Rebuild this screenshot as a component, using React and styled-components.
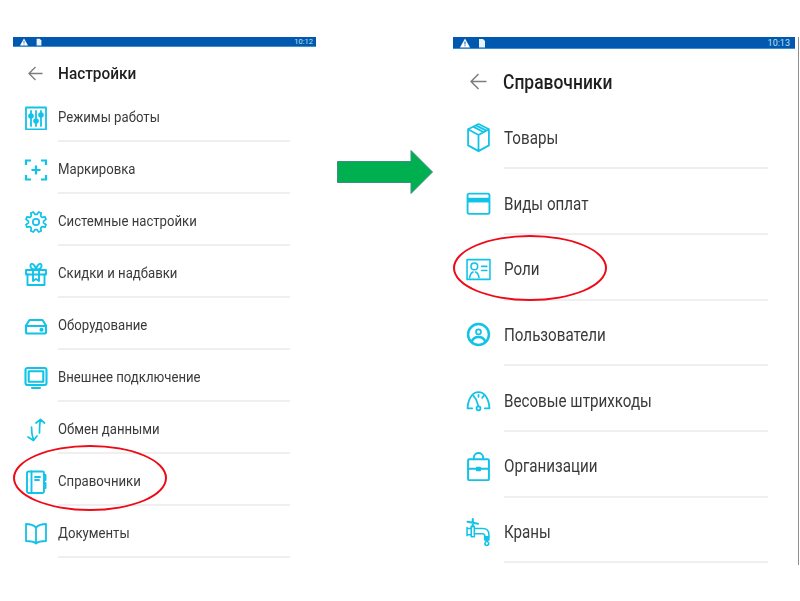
import React from "react";
import styled, { createGlobalStyle } from "styled-components";

const Global = createGlobalStyle`
  html, body {
    margin: 0;
    background: #fff;
    font-family: Roboto, "Liberation Sans", sans-serif;
  }
`;

const Page = styled.div`
  width: 800px;
  height: 601px;
  box-sizing: border-box;
  padding: 37px 0 0 13px;
  display: flex;
  align-items: flex-start;
  overflow: hidden;
`;

const Panel = styled.section`
  width: ${(p) => p.$width}px;
  height: ${(p) => p.$height}px;
  flex: none;
  filter: blur(0.35px);
  border-right: ${(p) => (p.$edge ? "1px solid #8e8e8e" : "none")};
  padding-right: ${(p) => (p.$edge ? 3 : 0)}px;
`;

const StatusBar = styled.div`
  height: ${(p) => p.$height}px;
  background: #0059ae;
  border-bottom: 1px solid #3f8fd0;
  box-sizing: border-box;
  padding: 0 ${(p) => p.$pad}px 0 7px;
  display: flex;
  align-items: center;
  gap: 7px;
  color: #fff;
`;

const Time = styled.span`
  margin-left: auto;
  font-size: ${(p) => p.$size}px;
  color: #bfe0f2;
`;

const Header = styled.header`
  height: ${(p) => p.$height}px;
  box-sizing: border-box;
  padding: ${(p) => p.$top}px 0 0 ${(p) => p.$pad}px;
  display: flex;
  align-items: center;
  gap: ${(p) => p.$gap}px;
`;

const Title = styled.h1`
  margin: 0;
  font-size: ${(p) => p.$size}px;
  font-weight: 500;
  color: #1f1f1f;
  white-space: nowrap;
  transform: scaleX(${(p) => p.$squeeze});
  transform-origin: left center;
`;

const BackIcon = styled.svg`
  flex: none;
  color: #7d7d7d;
`;

const List = styled.ul`
  list-style: none;
  margin: 0;
  padding: 0;
`;

const Row = styled.li`
  position: relative;
  height: ${(p) => p.$height}px;
  display: flex;
  align-items: stretch;
  padding: 0 ${(p) => p.$right}px 0 ${(p) => p.$left}px;
`;

const IconCell = styled.span`
  flex: none;
  width: ${(p) => p.$size}px;
  margin-right: ${(p) => p.$gap}px;
  padding-top: ${(p) => p.$lift}px;
  display: flex;
  align-items: center;
  justify-content: center;
  color: #12c3e8;

  svg {
    width: ${(p) => p.$size}px;
    height: auto;
    display: block;
  }
`;

const Label = styled.span`
  flex: 1;
  display: flex;
  align-items: center;
  box-sizing: border-box;
  padding-top: ${(p) => p.$lift}px;
  border-bottom: 2px solid #efefef;
`;

const LabelText = styled.span`
  font-size: ${(p) => p.$size}px;
  color: #3a3a3a;
  white-space: nowrap;
  transform: scaleX(${(p) => p.$squeeze});
  transform-origin: left center;
`;

const Oval = styled.span`
  position: absolute;
  left: 0;
  top: ${(p) => p.$top}px;
  width: 154px;
  height: 66px;
  box-sizing: border-box;
  border: 2.5px solid #ee0a16;
  border-radius: 50%;
`;

const ArrowSlot = styled.div`
  width: 137px;
  flex: none;
  padding: 113px 0 0 21px;
  box-sizing: border-box;

  svg {
    display: block;
  }
`;

const Line = ({ children, sw = 1.9, h = 24 }) => (
  <svg viewBox={`0 0 24 ${h}`} fill="none" stroke="currentColor" strokeWidth={sw} strokeLinecap="round" strokeLinejoin="round">
    {children}
  </svg>
);

// eight pointed teeth round the wheel
const gearPath = (() => {
  const pts = [];
  for (let i = 0; i < 8; i++) {
    const a = (i * Math.PI) / 4 + Math.PI / 8;
    [[-0.27, 7.6], [-0.13, 10.4], [0.13, 10.4], [0.27, 7.6]].forEach(([d, r]) => {
      pts.push(`${(12 + r * Math.cos(a + d)).toFixed(2)} ${(12 + r * Math.sin(a + d)).toFixed(2)}`);
    });
  }
  return `M${pts.join("L")}z`;
})();

const icons = {
  sliders: (
    <Line sw={1.8}>
      <rect x="2" y="1.5" width="20" height="22" />
      <path d="M7 5v3M7 12v8M12 5v8M12 17v3M17 5v2M17 11v9" />
      <circle cx="7" cy="10" r="1.9" fill="currentColor" />
      <circle cx="12" cy="15" r="1.9" fill="currentColor" />
      <circle cx="17" cy="9" r="1.9" fill="currentColor" />
    </Line>
  ),
  scan: (
    <Line sw={2.2}>
      <path d="M2 7V2.5h5M17 2.5h5V7M2 17v4.5h5M17 21.5h5V17M12 7.5v9M7.5 12h9" strokeLinecap="butt" strokeLinejoin="miter" />
    </Line>
  ),
  gear: (
    <Line sw={1.7}>
      <path d={gearPath} />
      <circle cx="12" cy="12" r="3.2" />
    </Line>
  ),
  gift: (
    <Line>
      <rect x="2" y="8" width="20" height="4.5" />
      <path d="M3.5 12.5V23h17V12.5M9 8v11l3-2 3 2V8" />
      <path d="M12 8C9 7.5 6 6 6.5 3 7.5.5 11 2 12 8zM12 8c3-.5 6-2 5.500-5C16.500.5 13 2 12 8z" />
    </Line>
  ),
  drive: (
    <Line sw={2.1}>
      <path d="M2 11.5l3.500-5.500h13l3.500 5.500V18a1.500 1.500 0 0 1-1.500 1.500h-17A1.500 1.500 0 0 1 2 18z" />
      <path d="M2 12h20" />
      <circle cx="17.5" cy="15.7" r="1" fill="currentColor" />
    </Line>
  ),
  monitor: (
    <Line sw={2.1}>
      <rect x="1.5" y="2" width="21" height="17" rx="2" />
      <rect x="4.7" y="5.2" width="14.6" height="10.6" />
      <path d="M8 22h8" />
    </Line>
  ),
  exchange: (
    <Line sw={1.7}>
      <path d="M15.500 15c0-4 0-9 1-13.500M12 5l4.500-3.500L20.500 5M7.500 9c0 4 .5 9 2 13M4 19l5.500 3.500L13 18" />
    </Line>
  ),
  notebook: (
    <Line>
      <rect x="3" y="1.5" width="17" height="21.5" rx="1.5" />
      <path d="M7.500 1.500v21.500M11 7h5M11 10h4M20 5h1.500v5H20M20 13h1.500v5H20" />
    </Line>
  ),
  book: (
    <Line sw={1.8}>
      <path d="M12 5.500C9.500 3 6 2 2 2v17c4 0 8 .5 10 2.500 2-2 6-2.500 10-2.500V2c-4 0-7.500 1-10 3.500zM12 5.500v16" />
    </Line>
  ),
  box: (
    <Line sw={1.7} h={28}>
      <path d="M12 1l10 5v15.500L12 27 2 21.500V6zM2 6l10 5.500L22 6M12 11.500V27M7 3.500l10 5.300M9.500 2.300l10 5" />
    </Line>
  ),
  card: (
    <svg viewBox="0 0 24 24" fill="none" stroke="currentColor" strokeWidth="1.8" strokeLinejoin="round">
      <rect x="1.5" y="2.5" width="21" height="19.5" rx="1.5" />
      <rect x="1" y="6.5" width="22" height="4.5" fill="currentColor" stroke="none" />
    </svg>
  ),
  role: (
    <Line sw={1.5}>
      <rect x="1" y="2.5" width="22" height="19" />
      <circle cx="8" cy="9" r="3.2" />
      <path d="M3.500 20c.5-3.500 2-5 3.300-5.500M12.500 20c-.5-3.500-2-5-3.300-5.500M15 9h5M15 13h5" />
    </Line>
  ),
  user: (
    <Line sw={2.4}>
      <circle cx="12" cy="12" r="10" />
      <circle cx="12" cy="9.5" r="2.4" strokeWidth="1.6" />
      <path d="M5.500 19c1-3.500 3.500-4.500 6.500-4.500s5.500 1 6.500 4.500" />
    </Line>
  ),
  gauge: (
    <Line sw={1.7}>
      <path d="M6 19.500H1.500C2 10.500 6 4 12 4s10 6.500 10.500 15.500H18" />
      <path d="M7 7.500l1.500 2M17 7.500l-1.500 2M12 6.500v2M12 17.500L9.500 10.500" />
      <circle cx="12" cy="19.5" r="1.9" />
    </Line>
  ),
  case: (
    <Line sw={1.9} h={28}>
      <rect x="2" y="7" width="20" height="20" rx="1" />
      <path d="M7.500 7V5.500C7.500 2.500 10 1 12 1s4.500 1.500 4.500 4.500V7M2 16h20" />
      <rect x="10.5" y="15" width="3" height="2.5" fill="currentColor" />
    </Line>
  ),
  tap: (
    <Line sw={1.5} h={28}>
      <path d="M1 10v8M1 11h4M1 17h4M5 9h3v10H5zM8 11h8c4 0 6 2.500 6 6v2h-4v-1c0-1-1-2-2.500-2H8" />
      <path d="M1.500 4.500l10 2M6.500 9V2" strokeWidth="2" />
      <path d="M18 19.500h4V22h-4z" fill="currentColor" />
      <path d="M20 22.500c-1 1.500-1.800 2-1.800 3a1.800 1.800 0 0 0 3.600 0c0-1-.8-1.500-1.800-3z" />
    </Line>
  ),
};

const settings = [
  ["sliders", "Режимы работы"],
  ["scan", "Маркировка"],
  ["gear", "Системные настройки"],
  ["gift", "Скидки и надбавки"],
  ["drive", "Оборудование"],
  ["monitor", "Внешнее подключение"],
  ["exchange", "Обмен данными"],
  ["notebook", "Справочники", -9],
  ["book", "Документы"],
];

const catalogs = [
  ["box", "Товары"],
  ["card", "Виды оплат"],
  ["role", "Роли", 0],
  ["user", "Пользователи"],
  ["gauge", "Весовые штрихкоды"],
  ["case", "Организации"],
  ["tap", "Краны"],
];

const StatusIcons = ({ size }) => (
  <>
    <svg width={size} height={size} viewBox="0 0 10 10" fill="#fff">
      <path d="M5 .5L10 9.500H0z" />
      <path d="M4.500 3.500h1v3h-1zM4.500 7.200h1v1h-1z" fill="#0059ae" />
    </svg>
    <svg width={size} height={size} viewBox="0 0 10 10" fill="#e8f2fa">
      <path d="M2 1h4l2 2v6.500H2z" />
    </svg>
  </>
);

const Screen = ({ m, items, time }) => (
  <Panel $width={m.width} $height={m.height} $edge={m.edge}>
    <StatusBar $height={m.bar} $pad={m.timePad}>
      <StatusIcons size={m.statusIcon} />
      <Time $size={m.timeSize}>{time.text}</Time>
    </StatusBar>
    <Header $height={m.header} $top={m.headerTop} $pad={m.headerPad} $gap={m.headerGap}>
      <BackIcon width={m.back} height={m.back} viewBox="0 0 16 16" fill="none" stroke="currentColor" strokeWidth="1.4">
        <path d="M15.500 8H1M8 1L1 8l7 7" />
      </BackIcon>
      <Title $size={m.title} $squeeze={m.titleSqueeze}>{time.title}</Title>
    </Header>
    <List>
      {items.map(([icon, label, oval]) => (
        <Row key={label} $height={m.row} $left={m.left} $right={m.right}>
          <IconCell $size={m.icon} $gap={m.iconGap} $lift={m.iconLift}>
            {icons[icon]}
          </IconCell>
          <Label $lift={m.textLift}>
            <LabelText $size={m.text} $squeeze={m.textSqueeze}>{label}</LabelText>
          </Label>
          {oval !== undefined && <Oval $top={oval} />}
        </Row>
      ))}
    </List>
  </Panel>
);

const leftMetrics = {
  width: 303, height: 528, bar: 10, timePad: 3, statusIcon: 8, timeSize: 7.5,
  header: 43, headerTop: 9, headerPad: 15, headerGap: 15, back: 15, title: 16, titleSqueeze: 0.96,
  row: 52, left: 11, right: 26, icon: 24, iconGap: 10, iconLift: 3, text: 14, textSqueeze: 0.94, textLift: 4,
};

const rightMetrics = {
  width: 342, height: 528, edge: true, bar: 12, timePad: 5, statusIcon: 10, timeSize: 9,
  header: 54.5, headerTop: 11, headerPad: 17, headerGap: 16, back: 17, title: 20, titleSqueeze: 0.872,
  row: 65.7, left: 13, right: 27, icon: 25, iconGap: 13, iconLift: 3, text: 17.5, textSqueeze: 0.867, textLift: 5,
};

export default function App() {
  return (
    <Page>
      <Global />
      <Screen m={leftMetrics} items={settings} time={{ text: "10:12", title: "Настройки" }} />
      <ArrowSlot>
        <svg width="96" height="44" viewBox="0 0 96 44">
          <path d="M.5 11.500H74V.5L95.500 22 74 43.500V32.500H.5z" fill="#00b050" stroke="#3f8f80" strokeWidth="1" />
        </svg>
      </ArrowSlot>
      <Screen m={rightMetrics} items={catalogs} time={{ text: "10:13", title: "Справочники" }} />
    </Page>
  );
}
